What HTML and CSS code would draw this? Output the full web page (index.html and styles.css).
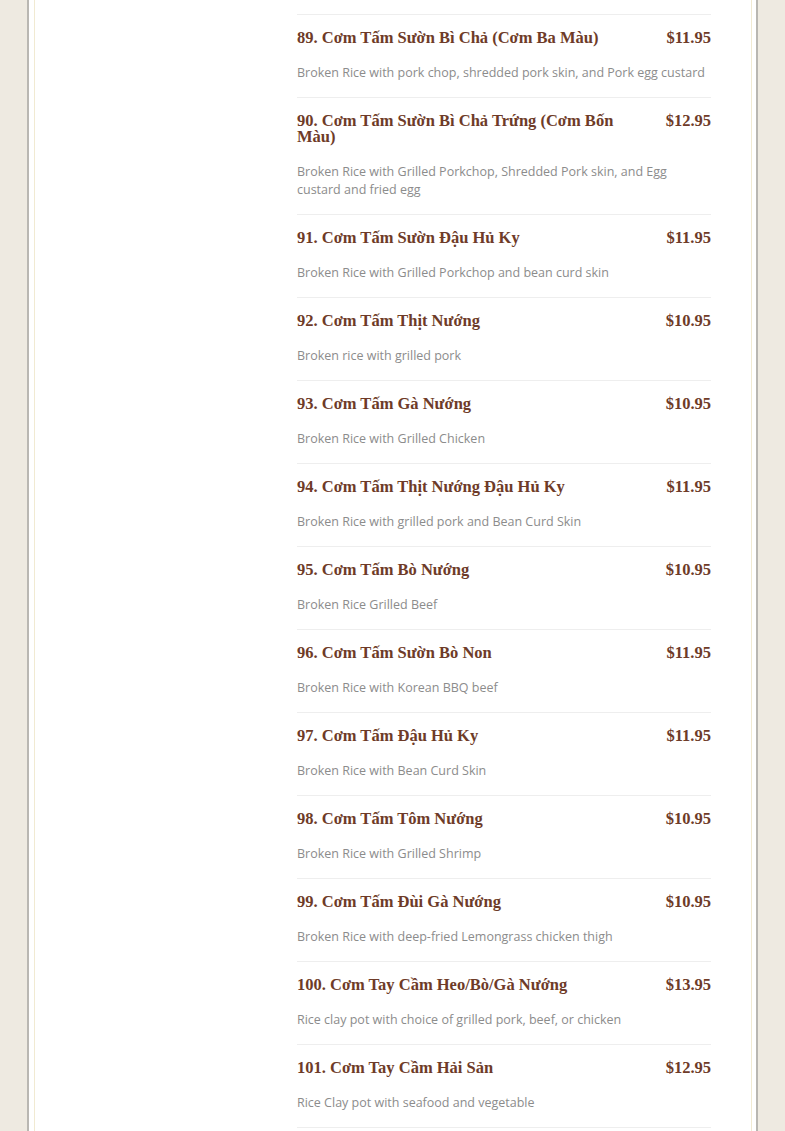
FILE: index.html
```html
<!DOCTYPE html>
<html lang="en">
<head>
  <meta charset="UTF-8" />
  <meta name="viewport" content="width=device-width, initial-scale=1.0"/>
  <title>Menu - Cơm Tấm</title>
  <!-- css-->
  <link rel="stylesheet" href="styles.css">
</head>
<body>
  <div class="page">
    <div class="page-inner">
      <!--left column, empty on this part of the page-->
      <aside class="sidebar"></aside>

      <!--Broken rice menu-->
      <div class="menu-list">
        <div class="menu-item">
          <div class="item-head">
            <h3 class="item-name">89. Cơm Tấm Sườn Bì Chả (Cơm Ba Màu)</h3>
            <span class="item-price">$11.95</span>
          </div>
          <p class="item-desc">Broken Rice with pork chop, shredded pork skin, and Pork egg custard</p>
        </div>

        <div class="menu-item">
          <div class="item-head">
            <h3 class="item-name">90. Cơm Tấm Sườn Bì Chả Trứng (Cơm Bốn Màu)</h3>
            <span class="item-price">$12.95</span>
          </div>
          <p class="item-desc">Broken Rice with Grilled Porkchop, Shredded Pork skin, and Egg custard and fried egg</p>
        </div>

        <div class="menu-item">
          <div class="item-head">
            <h3 class="item-name">91. Cơm Tấm Sườn Đậu Hủ Ky</h3>
            <span class="item-price">$11.95</span>
          </div>
          <p class="item-desc">Broken Rice with Grilled Porkchop and bean curd skin</p>
        </div>

        <div class="menu-item">
          <div class="item-head">
            <h3 class="item-name">92. Cơm Tấm Thịt Nướng</h3>
            <span class="item-price">$10.95</span>
          </div>
          <p class="item-desc">Broken rice with grilled pork</p>
        </div>

        <div class="menu-item">
          <div class="item-head">
            <h3 class="item-name">93. Cơm Tấm Gà Nướng</h3>
            <span class="item-price">$10.95</span>
          </div>
          <p class="item-desc">Broken Rice with Grilled Chicken</p>
        </div>

        <div class="menu-item">
          <div class="item-head">
            <h3 class="item-name">94. Cơm Tấm Thịt Nướng Đậu Hủ Ky</h3>
            <span class="item-price">$11.95</span>
          </div>
          <p class="item-desc">Broken Rice with grilled pork and Bean Curd Skin</p>
        </div>

        <div class="menu-item">
          <div class="item-head">
            <h3 class="item-name">95. Cơm Tấm Bò Nướng</h3>
            <span class="item-price">$10.95</span>
          </div>
          <p class="item-desc">Broken Rice Grilled Beef</p>
        </div>

        <div class="menu-item">
          <div class="item-head">
            <h3 class="item-name">96. Cơm Tấm Sườn Bò Non</h3>
            <span class="item-price">$11.95</span>
          </div>
          <p class="item-desc">Broken Rice with Korean BBQ beef</p>
        </div>

        <div class="menu-item">
          <div class="item-head">
            <h3 class="item-name">97. Cơm Tấm Đậu Hủ Ky</h3>
            <span class="item-price">$11.95</span>
          </div>
          <p class="item-desc">Broken Rice with Bean Curd Skin</p>
        </div>

        <div class="menu-item">
          <div class="item-head">
            <h3 class="item-name">98. Cơm Tấm Tôm Nướng</h3>
            <span class="item-price">$10.95</span>
          </div>
          <p class="item-desc">Broken Rice with Grilled Shrimp</p>
        </div>

        <div class="menu-item">
          <div class="item-head">
            <h3 class="item-name">99. Cơm Tấm Đùi Gà Nướng</h3>
            <span class="item-price">$10.95</span>
          </div>
          <p class="item-desc">Broken Rice with deep-fried Lemongrass chicken thigh</p>
        </div>

        <div class="menu-item">
          <div class="item-head">
            <h3 class="item-name">100. Cơm Tay Cầm Heo/Bò/Gà Nướng</h3>
            <span class="item-price">$13.95</span>
          </div>
          <p class="item-desc">Rice clay pot with choice of grilled pork, beef, or chicken</p>
        </div>

        <div class="menu-item">
          <div class="item-head">
            <h3 class="item-name">101. Cơm Tay Cầm Hải Sản</h3>
            <span class="item-price">$12.95</span>
          </div>
          <p class="item-desc">Rice Clay pot with seafood and vegetable</p>
        </div>
      </div>
    </div>
  </div>
</body>
</html>
```

FILE: styles.css
```css
body {
  margin: 0;
  padding: 0;
  background-color: #eeeae1;
  font-family: "Open Sans", "Noto Sans", sans-serif;
}

.page {
  width: 731px;
  margin: 0 auto;
  box-sizing: border-box;
  background-color: #ffffff;
  border-left: 2px solid #b9b7b2;
  border-right: 2px solid #b9b7b2;
  padding: 0 4px 0 5px;
  min-height: 1131px;
}

.page-inner {
  border-left: 1px solid #f1ead2;
  border-right: 1px solid #f1ead2;
  min-height: 1131px;
  display: grid;
  grid-template-columns: 1fr 414px;
  padding-right: 40px;
}

.menu-list {
  padding-top: 14px;
}

.menu-item {
  border-top: 1px solid #eeeeee;
  padding: 15px 0 15px;
}

.menu-item:last-child {
  border-bottom: 1px solid #eeeeee;
}

.item-head {
  display: flex;
  justify-content: space-between;
  align-items: flex-start;
}

.item-name {
  margin: 0;
  width: 325px;
  font-family: "Liberation Serif", "DejaVu Serif", serif;
  font-size: 16.5px;
  line-height: 16px;
  font-weight: bold;
  color: #6e3b28;
}

.item-price {
  font-family: "Liberation Serif", "DejaVu Serif", serif;
  font-size: 16.5px;
  line-height: 16px;
  font-weight: bold;
  color: #6e3b28;
}

.item-desc {
  margin: 18px 0 0;
  font-size: 12.5px;
  line-height: 18px;
  color: #8c8c8c;
}
```
